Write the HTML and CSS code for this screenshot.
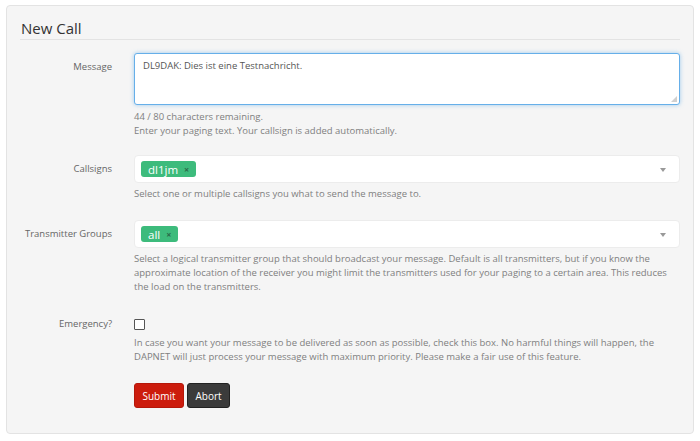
FILE: index.html
```html
<!DOCTYPE html>
<html>
<head>
<meta charset="utf-8">
<link rel="stylesheet" href="styles.css">
</head>
<body>
<div class="panel">
  <h2 class="legend">New Call</h2>
  <div class="row row-message">
    <label class="label">Message</label>
    <div class="field">
      <div class="textarea">DL9DAK: Dies ist eine Testnachricht.<span class="grip"></span></div>
      <p class="help">44 / 80 characters remaining.<br>Enter your paging text. Your callsign is added automatically.</p>
    </div>
  </div>
  <div class="row">
    <label class="label">Callsigns</label>
    <div class="field">
      <div class="select"><span class="tag">dl1jm <span class="x">×</span></span><span class="caret"></span></div>
      <p class="help">Select one or multiple callsigns you what to send the message to.</p>
    </div>
  </div>
  <div class="row">
    <label class="label">Transmitter Groups</label>
    <div class="field">
      <div class="select"><span class="tag">all <span class="x">×</span></span><span class="caret"></span></div>
      <p class="help">Select a logical transmitter group that should broadcast your message. Default is all transmitters, but if you know the approximate location of the receiver you might limit the transmitters used for your paging to a certain area. This reduces the load on the transmitters.</p>
    </div>
  </div>
  <div class="row row-check">
    <label class="label">Emergency?</label>
    <div class="field">
      <span class="checkbox"></span>
      <p class="help">In case you want your message to be delivered as soon as possible, check this box. No harmful things will happen, the DAPNET will just process your message with maximum priority. Please make a fair use of this feature.</p>
    </div>
  </div>
  <div class="row row-buttons">
    <span></span>
    <div class="buttons">
      <button class="btn btn-red">Submit</button>
      <button class="btn btn-dark">Abort</button>
    </div>
  </div>
</div>
</body>
</html>
```

FILE: styles.css
```css
* { box-sizing: border-box; }
html, body { margin: 0; padding: 0; background: #fff; }
body {
  font-family: "Open Sans", "Liberation Sans", sans-serif;
  font-size: 9.5px;
  color: #666;
  padding: 5px 6px 0 6px;
}
.panel {
  width: 688px;
  height: 429px;
  background: #f5f5f5;
  border: 1px solid #e3e3e3;
  border-radius: 4px;
  padding: 12px 13px 0 13px;
}
.legend {
  margin: 0;
  font-weight: 400;
  font-size: 15px;
  line-height: 20px;
  color: #333;
  padding: 0 0 1px 1px;
  border-bottom: 1px solid #e3e3e3;
  margin-bottom: 13px;
}
.row {
  display: grid;
  grid-template-columns: 92px 1fr;
  column-gap: 22px;
  margin-bottom: 19px;
}
.row-message { margin-bottom: 17px; }
.label {
  text-align: right;
  color: #666;
  padding-top: 7px;
  line-height: 14px;
}
.textarea {
  position: relative;
  height: 52px;
  background: #fff;
  border: 1px solid #66afe9;
  border-radius: 3px;
  box-shadow: 0 0 4px rgba(102, 175, 233, 0.6);
  padding: 5px 8px;
  color: #555;
  line-height: 14px;
}
.grip {
  position: absolute;
  right: 2px;
  bottom: 2px;
  width: 6px;
  height: 6px;
  background: radial-gradient(circle, #999 0.6px, transparent 0.8px) 0 0 / 2px 2px;
  clip-path: polygon(100% 0, 100% 100%, 0 100%);
}
.help {
  margin: 4px 0 0 0;
  color: #808080;
  line-height: 14px;
}
.row-message .help { margin-top: 5px; }
.select {
  position: relative;
  height: 28px;
  background: #fff;
  border: 1px solid #ececec;
  border-radius: 4px;
  padding: 5px 6px;
  display: flex;
  align-items: center;
}
.tag {
  display: inline-flex;
  align-items: center;
  height: 16px;
  background: #3dbb7c;
  color: #fff;
  border-radius: 3px;
  font-size: 11.5px;
  padding: 0 7px 0 7px;
}
.x {
  color: #2a6a4a;
  font-size: 9px;
  font-weight: 700;
  margin-left: 6px;
}
.caret {
  position: absolute;
  right: 13px;
  top: 12px;
  width: 0;
  height: 0;
  border-left: 3.5px solid transparent;
  border-right: 3.5px solid transparent;
  border-top: 4px solid #999;
}
.row-check { margin-top: 25px; }
.row-check .label { padding-top: 0; margin-top: -2px; }
.checkbox {
  display: block;
  width: 11px;
  height: 11px;
  border: 1px solid #555;
  background: #fff;
  border-radius: 1px;
}
.row-check .help { margin-top: 6px; }
.row-buttons { margin-top: 0; }
.buttons { display: flex; gap: 3px; }
.btn {
  font-family: inherit;
  font-size: 10px;
  height: 25px;
  border-radius: 3px;
  color: #fff;
  padding: 0 6px;
  cursor: pointer;
}
.btn-red {
  width: 50px;
  background: #cc1c0d;
  border: 1px solid #b5170a;
}
.btn-dark {
  width: 43px;
  background: #3b3b3b;
  border: 1px solid #222;
}
```
